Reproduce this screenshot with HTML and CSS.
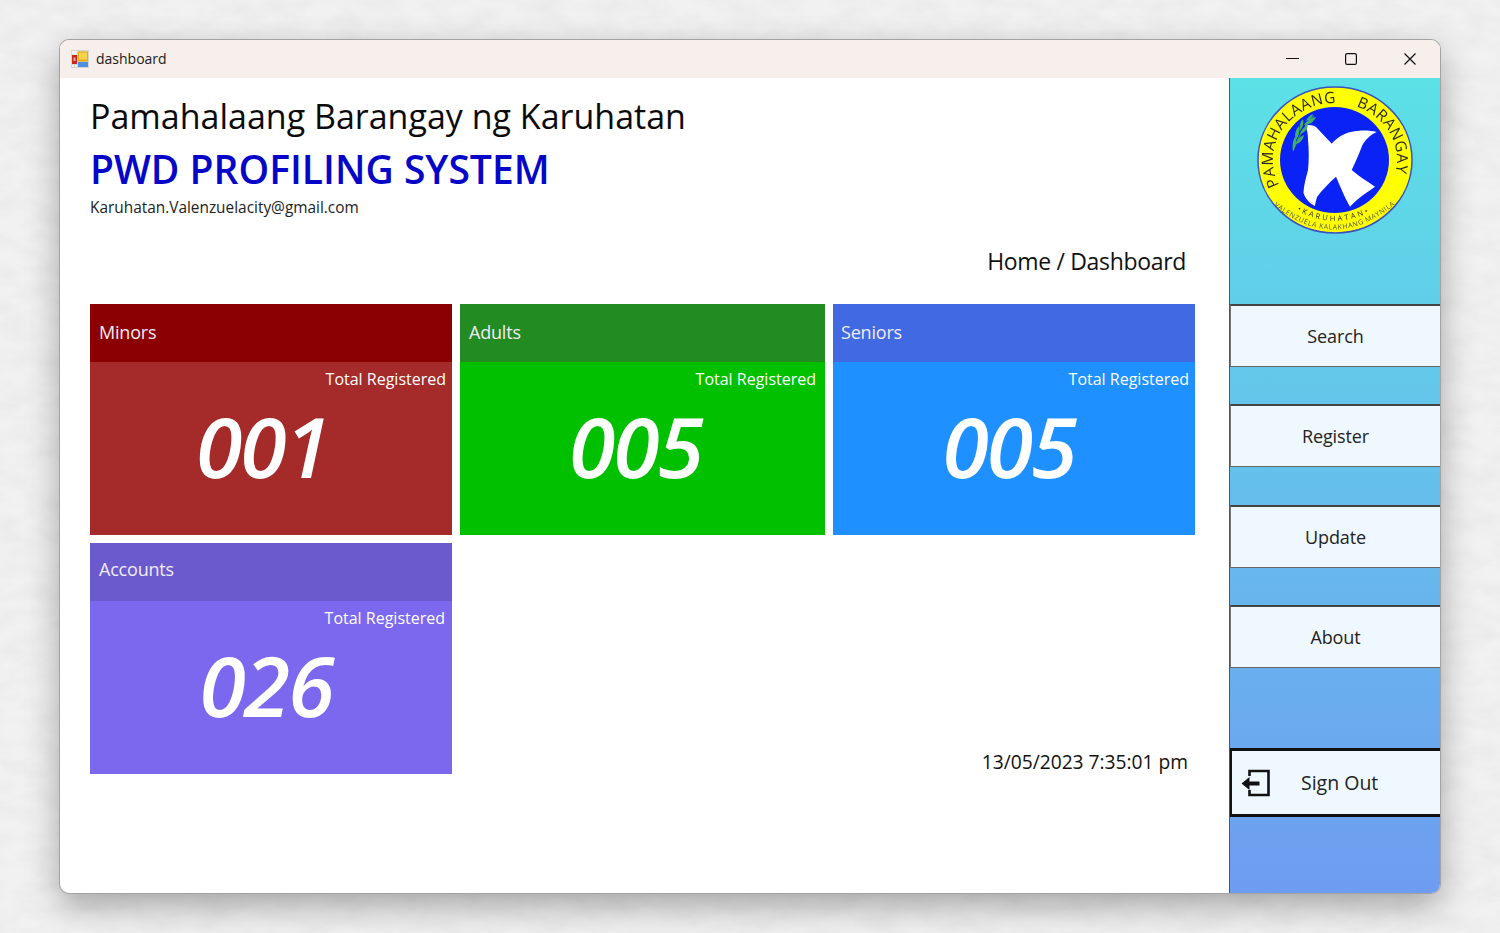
FILE: index.html
```html
<!DOCTYPE html>
<html lang="en">
<head>
<meta charset="utf-8">
<title>dashboard</title>
<link rel="stylesheet" href="styles.css">
</head>
<body>
<svg class="paper" width="1500" height="933" aria-hidden="true">
  <filter id="paperNoise" x="0" y="0" width="100%" height="100%">
    <feTurbulence type="fractalNoise" baseFrequency="0.03 0.06" numOctaves="4" seed="7"/>
    <feColorMatrix type="matrix" values="0 0 0 0 0.6  0 0 0 0 0.6  0 0 0 0 0.6  0.35 0 0 0 -0.12"/>
  </filter>
  <rect width="1500" height="933" filter="url(#paperNoise)"/>
</svg>
<div class="window">
  <header class="titlebar">
    <svg class="app-icon" width="18" height="18" viewBox="0 0 18 18">
      <rect width="18" height="18" fill="#d4d4d4"/>
      <rect x="1" y="1" width="5" height="3.500" fill="#f4f4f4"/>
      <rect x="1" y="5" width="5" height="9" fill="#c9261f"/>
      <rect x="2.500" y="7.500" width="2" height="3.500" fill="#f3a0a0"/>
      <rect x="7" y="1.500" width="10" height="10" fill="#e8a912"/>
      <rect x="8" y="2.500" width="8" height="7" fill="#fbd24a"/>
      <rect x="7" y="12" width="10" height="5" fill="#4f8fe0"/>
      <rect x="1" y="15" width="2" height="2" fill="#f4f4f4"/>
      <rect x="4" y="15" width="2" height="2" fill="#f4f4f4"/>
    </svg>
    <span class="title-text">dashboard</span>
    <div class="win-controls">
      <svg class="ctl ctl-min" width="13" height="12" viewBox="0 0 13 12"><path d="M0 5.500h13" stroke="#111" stroke-width="1.200" fill="none"/></svg>
      <svg class="ctl" width="12" height="12" viewBox="0 0 12 12"><rect x=".6" y=".6" width="10.800" height="10.800" rx="1.500" stroke="#111" stroke-width="1.200" fill="none"/></svg>
      <svg class="ctl" width="12" height="12" viewBox="0 0 12 12"><path d="M.5.5l11 11M11.500.5l-11 11" stroke="#111" stroke-width="1.200" fill="none"/></svg>
    </div>
  </header>
  <div class="client">
    <main class="main">
      <h1 class="org">Pamahalaang Barangay ng Karuhatan</h1>
      <h2 class="system">PWD PROFILING SYSTEM</h2>
      <p class="email">Karuhatan.Valenzuelacity@gmail.com</p>
      <p class="crumb">Home / Dashboard</p>
      <section class="cards">
        <article class="card minors">
          <h3 class="card-head">Minors</h3>
          <div class="card-body"><p class="card-label">Total Registered</p><p class="card-num">001</p></div>
        </article>
        <article class="card adults">
          <h3 class="card-head">Adults</h3>
          <div class="card-body"><p class="card-label">Total Registered</p><p class="card-num">005</p></div>
        </article>
        <article class="card seniors">
          <h3 class="card-head">Seniors</h3>
          <div class="card-body"><p class="card-label">Total Registered</p><p class="card-num">005</p></div>
        </article>
        <article class="card accounts">
          <h3 class="card-head">Accounts</h3>
          <div class="card-body"><p class="card-label">Total Registered</p><p class="card-num">026</p></div>
        </article>
        <p class="clock">13/05/2023 7:35:01 pm</p>
      </section>
    </main>
    <aside class="side">
      <div class="logo-wrap">
        <svg class="logo" width="170" height="160" viewBox="0 0 170 160">
          <defs>
            <path id="arcTop" d="M29.300 105 A62 57 0 1 1 140.700 105"/>
            <path id="arcMid" d="M46 130 Q85 152 124 130"/>
            <path id="arcLow" d="M22 124 Q85 176 148 122"/>
          </defs>
          <ellipse cx="85" cy="80" rx="77" ry="73" fill="#ffff00" stroke="#3a50c0" stroke-width="1.500"/>
          <ellipse cx="84.500" cy="80" rx="54.500" ry="53" fill="#0a22f5"/>
          <path fill="#fff" d="M55 45 C60 45 63 45 66 47 C71 52 76 58 81.700 63.500 C87 58 94 53 101 52 C110 50 119 50 126.700 52 C120 55 115 60 112 66 C109 74 105 83 101.700 90 C108 96 117 101 125 106.700 C118 112 109 117 100 126.700 C95 118 90 106 86 96.700 C79 103 72 110 67 117 C66 121 65 124 65 126 C59 123 55 118 53.500 113 C54 104 56 98 58 90 C59 80 59 70 58 60 C58 54 57 49 55 45 Z"/>
          <g class="branch">
            <path class="branch-stem" d="M43 71 C47 60 52 48 64 36"/>
            <path class="branch-leaf" d="M43 71 C42 65 43 60 45 57 C47 61 46 66 43 71Z M46 60 C44 54 46 49 49 46 C50 51 49 56 46 60Z M50 51 C49 47 50 42 53 39 C54 43 53 47 50 51Z M46 64 C47 59 50 57 54 55 C53 60 50 63 46 64Z M50 54 C51 50 54 47 58 45 C57 50 54 53 50 54Z M54 45 C56 41 60 39 66 37 C64 42 59 45 54 45Z M56 41 C58 37 60 35 63 34 C62 38 60 40 56 41Z"/>
          </g>
          <text class="logo-big"><textPath href="#arcTop" startOffset="0">PAMAHALAANG</textPath></text>
          <text class="logo-big"><textPath href="#arcTop" startOffset="141">BARANGAY</textPath></text>
          <text class="logo-mid"><textPath href="#arcMid" startOffset="1">•KARUHATAN•</textPath></text>
          <text class="logo-small"><textPath href="#arcLow" startOffset="2">VALENZUELA KALAKHANG MAYNILA</textPath></text>
        </svg>
      </div>
      <button class="nav nav-1">Search</button>
      <button class="nav nav-2">Register</button>
      <button class="nav nav-3">Update</button>
      <button class="nav nav-4">About</button>
      <button class="nav signout">
        <svg class="signout-icon" width="30" height="28" viewBox="0 0 30 28"><path d="M9.500 7V2H28.500V26H9.500V21" fill="none" stroke="#111" stroke-width="2.600"/><path d="M1.500 14.500l8-6.500v4.500h10v4h-10v4.500z" fill="#111"/></svg>
        <span>Sign Out</span>
      </button>
    </aside>
  </div>
</div>
</body>
</html>
```
FILE: styles.css
```css
* { box-sizing: border-box; }
html, body { margin: 0; height: 100%; }
body {
  position: relative;
  width: 1500px;
  height: 933px;
  overflow: hidden;
  padding: 40px 60px;
  background: #f1f1f1;
  font-family: "Open Sans", "Noto Sans", sans-serif;
  color: #111;
}
.paper { position: absolute; left: 0; top: 0; display: block; }
.window {
  position: relative;
  width: 1380px;
  height: 853px;
  display: flex;
  flex-direction: column;
  background: #fff;
  border-radius: 9px;
  overflow: hidden;
  box-shadow: 0 0 0 1px #a3a3a3, 0 12px 34px rgba(0,0,0,.33);
}
.titlebar {
  height: 38px;
  flex: none;
  display: flex;
  align-items: center;
  padding-left: 11px;
  background: #f6efeb;
}
.title-text { margin-left: 7px; padding-bottom: 2px; font-size: 14px; color: #1a1a1a; }
.win-controls { margin-left: auto; display: flex; align-items: center; gap: 47px; padding-right: 24px; }
.ctl { display: block; }
.ctl-min { margin-right: -1px; }
.client { flex: 1; display: flex; min-height: 0; }
.main { flex: 1; padding: 15px 34px 0 30px; min-width: 0; }
.org { margin: 0; font-size: 34px; line-height: 47px; font-weight: 400; color: #0b0b0b; }
.system { margin: 3px 0 0; font-size: 39px; line-height: 52px; font-weight: 600; color: #0606c8; }
.email { margin: 2px 0 0; font-size: 15.400px; line-height: 22px; color: #222; }
.crumb { margin: 26px 9px 0 0; font-size: 23px; line-height: 32px; text-align: right; letter-spacing: -.33px; color: #111; }
.cards {
  margin-top: 27px;
  display: grid;
  grid-template-columns: 362px 365px 362px;
  grid-auto-rows: 231px;
  column-gap: 8px;
  row-gap: 8px;
}
.card { display: flex; flex-direction: column; color: #fff; }
.card-head { margin: 0; height: 58px; flex: none; padding-left: 9px; font-size: 18px; line-height: 57px; font-weight: 400; letter-spacing: -.2px; color: #f1ecf5; }
.card-body { flex: 1; display: flex; flex-direction: column; padding-top: 6px; }
.card-label { margin: 0 6px 0 0; font-size: 16px; line-height: 23px; text-align: right; }
.card-num { margin: 10px 14px 0 0; font-size: 84px; line-height: 90px; font-style: italic; font-weight: 600; letter-spacing: -2px; text-align: center; }
.minors .card-head { background: #8b0000; }
.minors .card-body { background: #a52a2a; }
.minors .card-num { margin-right: 17px; }
.adults .card-head { background: #228b22; }
.adults .card-body { background: #00c000; }
.adults .card-label { margin-right: 9px; }
.seniors .card-head { background: #4169e1; padding-left: 8px; }
.seniors .card-body { background: #1e90ff; }
.seniors .card-num { margin-right: 10px; }
.accounts .card-head { background: #6a5acd; line-height: 53px; }
.accounts .card-body { background: #7b68ee; }
.accounts .card-label { margin-right: 7px; }
.accounts .card-num { margin-right: 10px; }
.clock { margin: 0 7px -1px 0; grid-column: 3; align-self: end; justify-self: end; font-size: 19.200px; line-height: 26px; }
.side {
  width: 211px;
  flex: none;
  display: flex;
  flex-direction: column;
  border-left: 1px solid #555;
  background: linear-gradient(180deg, #5ce1e6 0%, #6e9cf0 100%);
}
.logo-wrap { height: 226px; flex: none; padding: 2px 0 0 20px; }
.logo { display: block; filter: blur(.35px); }
.logo-big { font: 400 15.500px "Open Sans", sans-serif; fill: #2a2a2a; letter-spacing: .5px; }
.logo-mid { font: 400 7.500px "Open Sans", sans-serif; fill: #2a2a2a; letter-spacing: 2.500px; }
.logo-small { font: 400 7px "Open Sans", sans-serif; fill: #55553f; letter-spacing: .6px; }
.branch-stem { fill: none; stroke: #3b8f55; stroke-width: 1.200px; }
.branch-leaf { fill: #43b06a; }
.nav {
  display: block;
  width: 100%;
  height: 63px;
  flex: none;
  padding: 0;
  border: 0;
  border-top: 2px solid #444;
  border-bottom: 1px solid #666;
  border-left: 1px solid #777;
  background: #f0f8ff;
  font-family: inherit;
  font-size: 18px;
  letter-spacing: -.1px;
  color: #222;
}
.nav-2 { margin-top: 37px; }
.nav-3 { margin-top: 38px; }
.nav-4 { margin-top: 37px; }
.signout {
  margin-top: 80px;
  height: 69px;
  display: flex;
  align-items: center;
  border-top: 3px solid #111;
  border-bottom: 3px solid #111;
  border-left: 2px solid #111;
  padding-left: 8px;
}
.signout span { margin-left: 31px; font-size: 19.500px; letter-spacing: 0; }
.signout-icon { display: block; }
```
